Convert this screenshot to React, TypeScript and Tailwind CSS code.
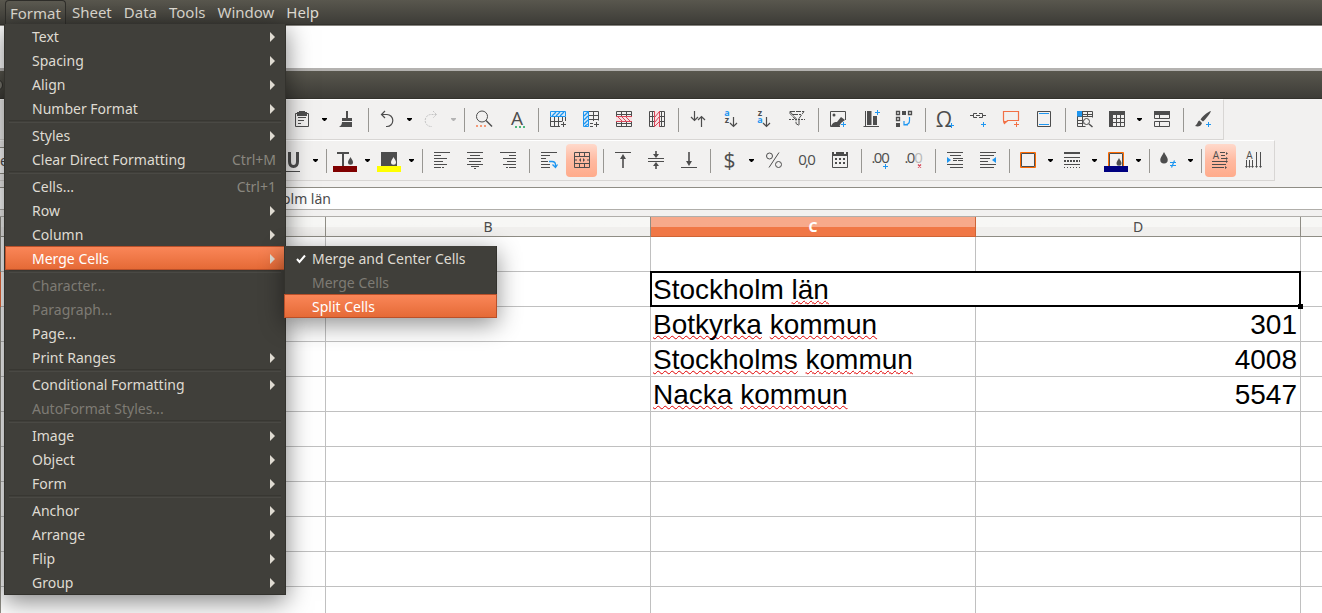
import React from "react";

const INK = "#4d4d4d";
const BLUE = "#1e96f0";
const RED = "#d8485a";

type Tool =
  | { kind: "button"; label: string; art: React.ReactNode; active?: boolean; muted?: boolean }
  | { kind: "caret"; label: string; muted?: boolean }
  | { kind: "sep" };

const sep: Tool = { kind: "sep" };
const caret = (label: string, muted = false): Tool => ({ kind: "caret", label: label + " options", muted });
const tool = (label: string, art: React.ReactNode, active = false): Tool => ({ kind: "button", label, art, active });

const Plus = ({ x, y, c = BLUE }: { x: number; y: number; c?: string }) => (
  <path d={`M${x - 2.5} ${y}h5M${x} ${y - 2.5}v5`} stroke={c} />
);
const Drop = ({ x, y, s = 1, c = INK }: { x: number; y: number; s?: number; c?: string }) => (
  <path
    d={`M${x} ${y}c${s} ${2.4 * s} ${2.5 * s} ${3.4 * s} ${2.5 * s} ${5.2 * s}a${2.5 * s} ${2.5 * s} 0 0 1 ${-5 * s} 0c0 ${-1.8 * s} ${1.5 * s} ${-2.8 * s} ${2.5 * s} ${-5.2 * s}z`}
    fill={c}
    stroke="none"
  />
);
const Label = ({ x, y, size, c = INK, bold, children }: { x: number; y: number; size: number; c?: string; bold?: boolean; children: string }) => (
  <text x={x} y={y} fontSize={size} fill={c} stroke="none" textAnchor="middle" fontWeight={bold ? 700 : 400} fontFamily="Open Sans, sans-serif">
    {children}
  </text>
);

const standardTools: Tool[] = [
  tool("Paste", <><path d="M5.5 6.5h13v13h-13zM8 10.5h8M8 13.5h6M8 16.5h3" /><path d="M7 5h2V4h6v1h2v4H7z" fill={INK} stroke="none" /></>),
  caret("Paste"),
  tool("Clone formatting", <path d="M12 4h2v7h4v3H8v-3h4zM8 15h10v5H5c2-1 3-3 3-5z" fill={INK} stroke="none" />),
  sep,
  tool("Undo", <path d="M10 4 6.5 7.5 10 11M6.5 7.5H12a5.8 6 0 0 1 0 12h-1" strokeWidth="1.2" />),
  caret("Undo"),
  tool("Redo", <path d="M14 4l3.500 3.500L14 11M17.500 7.500H12a5.800 6 0 0 0 0 12h1" strokeDasharray="2 1" stroke="#c4c4c4" />),
  caret("Redo", true),
  sep,
  tool("Find and replace", <><circle cx="11" cy="9.500" r="5.500" /><path d="M15 13.500l6 6" strokeWidth="1.400" /><path d="M5 19h2M9 19h2M13 19h2" stroke="#f59a78" strokeWidth="2" /></>),
  tool("Spelling", <><Label x={13} y={18} size={19}>A</Label><path d="M11 20h2M15 20h2M19 20h2" stroke="#4cb87c" strokeWidth="2" /></>),
  sep,
  tool("Insert row", <><path d="M5.500 10v9.500H15M9.500 10v9M13.500 10v9M17.500 10v4M5.500 14.500h12M20.500 10v4" /><path d="M5.500 4.500h15v5h-15z" stroke={BLUE} fill="#dcecf8" /><path d="M7 9l4-4M11 9l4-4M15 9l4-4" stroke={BLUE} strokeWidth="1.300" /><Plus x={18.5} y={17.5} c={INK} /></>),
  tool("Insert column", <><path d="M10 4.500h10.500v9M10 8.500h10.500M10 12.500h10.500M15.500 4v10M12 16.500h3M12 19.500h3" /><path d="M5.500 4.500h5v15h-5z" stroke={BLUE} fill="#dcecf8" /><path d="M6 9l4-4M6 13l4-4M6 17l4-4M7 19l3-2" stroke={BLUE} strokeWidth="1.300" /><Plus x={18.5} y={17.5} c={INK} /></>),
  tool("Delete rows", <><path d="M5.500 4.500h15v15h-15zM10.500 4v16M15.500 4v16M5 7.500h16M5 16.500h16" /><path d="M5 9h16v6H5z" fill="#f7e1e3" stroke="none" /><path d="M5 9.500h16M5 14.500h16M7 10l4 4M11 10l4 4M15 10l4 4" stroke={RED} /></>),
  tool("Delete columns", <><path d="M5.500 4.500h15v15h-15zM8.500 4v16M17.500 4v16M5 9.500h16M5 14.500h16" /><path d="M10 4h6v16h-6z" fill="#f7e1e3" stroke="none" /><path d="M10.500 4v16M15.500 4v16M11 10l4-5M11 15l4-5M11 19l4-4" stroke={RED} /></>),
  sep,
  tool("Sort", <path d="M9.500 4v9M6 10l3.500 3.500L13 10M16.500 20V9.500M13 13l3.500-3.500L20 13" strokeWidth="1.200" />),
  tool("Sort ascending", <><Label x={9} y={9} size={9} c={BLUE} bold>a</Label><Label x={9} y={16} size={9} bold>z</Label><path d="M15.500 10v9M12 16l3.500 3.500L19 16" strokeWidth="1.200" /></>),
  tool("Sort descending", <><Label x={9} y={9} size={9} bold>z</Label><Label x={9} y={16} size={9} c={BLUE} bold>a</Label><path d="M15.500 10v9M12 16l3.500 3.500L19 16" strokeWidth="1.200" /></>),
  tool("AutoFilter", <><path d="M6 4.500h14l-5 7v7l-3-2v-5zM9 7.500h8M6 4.500v2l5 5.500" strokeDasharray="5 1" /><path d="M5 12.500h16" strokeDasharray="2 1" /></>),
  sep,
  tool("Insert image", <><path d="M20.500 13V4.500h-15v15H15" /><circle cx="9" cy="8" r="1.500" fill={INK} stroke="none" /><path d="M6 19c2-4 4-4 6-4l4-5 4 3-4 3-2 4z" fill={INK} stroke="none" /><Plus x={18.5} y={17.5} /></>),
  tool("Insert chart", <><path d="M7.500 4v15.500M5.500 19.500H21" /><path d="M9 4h4.500v14H9zM15 9h4v9h-4z" fill={INK} stroke="none" /><Plus x={19.5} y={5.500} /></>),
  tool("Insert pivot table", <><path d="M5.500 4.500h3v3h-3zM17.500 4.500h3v3h-3zM5.500 10.500h3v3h-3z" strokeWidth="1.300" /><path d="M11 4h4v4h-4zM5 16h4v4H5z" fill={INK} stroke="none" /><path d="M18.500 10v3.500q0 4-4 4h-2M13 14v4h4" stroke={BLUE} strokeWidth="1.200" /></>),
  sep,
  tool("Insert special character", <><Label x={12} y={20} size={21}>Ω</Label><Plus x={19.5} y={18.5} /></>),
  tool("Insert hyperlink", <><path d="M5 8.500h3M18 8.500h3M12 6.500H8.500v4H12M14 6.500h3.500v4H14M11 8.500h4" /><Plus x={18.5} y={17.5} /></>),
  tool("Insert comment", <><path d="M5.500 4.500h15v9h-11l-3 3-1-3z" stroke="#f27146" strokeWidth="1.200" /><path d="M5 14h5l-4 3z" fill="#f27146" stroke="none" /><Plus x={18.5} y={17.5} c="#f27146" /></>),
  tool("Headers and footers", <><path d="M6.500 4.500h13v15h-13z" /><path d="M8 6.500h10M8 17.500h10" stroke={BLUE} /></>),
  sep,
  tool("Define print area", <><path d="M5.500 4.500h15v6M5.500 9.500h15M5.500 13.500h6M5.500 16.500h6M5.500 4.500v15h8M10.500 4v15M15.500 4v6M10 7.500h10" /><path d="M5 4h5v5.500H5z" fill={BLUE} stroke="none" /><circle cx="14.500" cy="14.500" r="3" fill="#f2f1f0" /><path d="M17 17l3.500 3" strokeWidth="1.500" /></>),
  tool("Freeze rows and columns", <><path d="M4 4h16v4H4zM4 4h4v16H4z" fill={INK} stroke="none" /><path d="M5 19.500h14.500V7M11.500 8v12M15.500 8v12M8 11.500h12M8 15.500h12" /></>),
  caret("Freeze"),
  tool("Split window", <><path d="M5 4h16v4H5z" fill={INK} stroke="none" /><path d="M5.500 8v3.500h15V8M10.500 8v4M5.500 14.500h15v5h-15zM10.500 14v6" /></>),
  sep,
  tool("Show draw functions", <><path d="M21 4c-4 1-9 6-10.500 8.500l2.500 2C15 13 20 7 21 4zM9.500 13.500c-2 .5-2 4-4.500 5.500 3 1 6 .5 7-3z" fill={INK} stroke="none" /><Plus x={18.5} y={17.5} /></>),
];

const formattingTools: Tool[] = [
  tool("Underline", <><path d="M8.500 4v9.500q0 5 4 5t4-5V4" strokeWidth="3" /><path d="M2 23.500h17" /></>),
  caret("Underline"),
  sep,
  tool("Font color", <><path d="M4 5h12M10 5v13" strokeWidth="2" /><Drop x={17.5} y={9} /><path d="M0 18h24v6H0z" fill="#800000" stroke="none" /></>),
  caret("Font color"),
  tool("Highlighting color", <><path d="M4 4h16v14H4z" fill={INK} stroke="none" /><Drop x={16.5} y={9} c="#f2f1f0" /><path d="M0 18h24v6H0z" fill="#ffff00" stroke="none" /></>),
  caret("Highlighting color"),
  sep,
  tool("Align left", <path d="M5 4.500h16M5 7.500h7M5 10.500h13M5 13.500h9M5 16.500h13M5 19.500h7M13 19.500h2" />),
  tool("Center horizontally", <path d="M5 4.500h16M8 7.500h10M5 10.500h16M7 13.500h12M5 16.500h16M9 18.500h8M12 20.500h2" />),
  tool("Align right", <path d="M5 4.500h16M14 7.500h7M8 10.500h13M12 13.500h9M8 16.500h13M14 19.500h7M11 19.500h2" />),
  sep,
  tool("Wrap text", <><path d="M5 4.500h16M5 7.500h9M5 10.500h5M5 13.500h7M5 16.500h9M5 19.500h9" /><path d="M13 13.500h3q3.500 0 3.500 3.500v2M16.500 16.500l3 3 2-3" stroke={BLUE} strokeWidth="1.300" /></>),
  tool("Merge and center cells", <><path d="M5.500 4.500h15v15h-15zM5.500 8.500h15M5.500 15.500h15M10.500 4v4M15.500 4v4M10.500 16v4M15.500 16v4M5 12h3M18 12h3" /><path d="M12 10v4l-2-2zM14 10v4l2-2z" fill={INK} stroke="none" /></>, true),
  sep,
  tool("Align top", <><path d="M5 4.500h16" /><path d="M13 9v11" strokeWidth="1.600" /><path d="M13 6l3 5h-6z" fill={INK} stroke="none" /></>),
  tool("Center vertically", <><path d="M5 10.500h16M5 13.500h16" /><path d="M13 3v5M13 16v5" strokeWidth="1.600" /><path d="M10 6h6l-3 4zM10 18h6l-3-4z" fill={INK} stroke="none" /></>),
  tool("Align bottom", <><path d="M5 19.500h16" /><path d="M13 4v10" strokeWidth="1.600" /><path d="M13 18l3-5h-6z" fill={INK} stroke="none" /></>),
  sep,
  tool("Format as currency", <Label x={12.500} y={19.500} size={21}>$</Label>),
  caret("Currency"),
  tool("Format as percent", <><circle cx="8.500" cy="8" r="3" /><circle cx="17.500" cy="16.500" r="3" /><path d="M18 4.500l-10 15" /></>),
  tool("Format as number", <><Label x={8.500} y={17} size={15}>0</Label><Label x={13} y={18} size={15}>,</Label><Label x={17.500} y={17} size={15}>0</Label></>),
  tool("Format as date", <><path d="M5.500 7v12.500h15V7" /><path d="M5 4h2v2h2V4h8v2h2V4h2v4H5zM8 10h2v2H8zM12 10h2v2h-2zM16 10h2v2h-2zM8 14h2v2H8zM12 14h2v2h-2zM16 14h2v2h-2z" fill={INK} stroke="none" /></>),
  sep,
  tool("Add decimal place", <><Label x={5.500} y={15} size={15}>.</Label><Label x={10} y={15} size={15}>0</Label><Label x={17.500} y={15} size={15}>0</Label><Plus x={17.500} y={18.500} /></>),
  tool("Delete decimal place", <><Label x={5.500} y={15} size={15}>.</Label><Label x={10} y={15} size={15}>0</Label><Label x={17.500} y={15} size={15} c="#b9b9b9">0</Label><path d="M17 16.500l3 3M20 16.500l-3 3" stroke={RED} strokeWidth="1.300" /></>),
  sep,
  tool("Increase indent", <><path d="M5 4.500h16M8 7.500h11M11 10.500h10M11 12.500h4M16 12.500h5M5 16.500h16M8 19.500h13" /><path d="M5 9v6l4-3z" fill={BLUE} stroke="none" /></>),
  tool("Decrease indent", <><path d="M5 4.500h16M5 7.500h14M5 10.500h10M5 13.500h8M5 16.500h16M5 19.500h14" /><path d="M21 9v6l-4-3z" fill={BLUE} stroke="none" /></>),
  sep,
  tool("Borders", <><path d="M4.500 4.500h15v15h-15z" stroke="#ff6a00" /><path d="M5.500 5.500h13v13h-13z" /></>),
  caret("Borders"),
  tool("Border style", <><path d="M4 5h16" strokeWidth="2" /><path d="M4 9.500h16M4 16.500h16" /><path d="M4 13h16" strokeWidth="2" strokeDasharray="2 1" /><path d="M4 19.500h16" strokeDasharray="1 2" /></>),
  caret("Border style"),
  tool("Border color", <><path d="M4.500 18V4.500h15V18" stroke="#ff6a00" /><path d="M5.500 18V5.500h13V18" /><Drop x={15} y={10} /><path d="M0 18h24v6H0z" fill="#000080" stroke="none" /></>),
  caret("Border color"),
  sep,
  tool("Conditional formatting", <><Drop x={8} y={4} s={1.5} /><path d="M14 14.500h6M14 17.500h6M18.500 12.500l-3 7" stroke={BLUE} strokeWidth="1.200" /></>),
  caret("Conditional formatting"),
  sep,
  tool("Text direction from left to right", <><Label x={8} y={11} size={10}>A</Label><path d="M12 4.500h5M13 7.500h4M13 10.500h5M4 13.500h14M4 16.500h14M4 19.500h12" /><path d="M18 4l2 1.500-2 1.500zM18 9l2 1.500-2 1.500zM18 12l2 1.500-2 1.500zM17 18l2 1.500-2 1.500z" fill={INK} stroke="none" /></>, true),
  tool("Text direction from top to bottom", <><Label x={8.500} y={11} size={10}>A</Label><path d="M5.500 12v6M8.500 12v6M11.500 12v6M15.500 4v14M19.500 4v14" /><path d="M4 18h3l-1.500 2zM7 18h3l-1.500 2zM10 18h3l-1.500 2zM14 18h3l-1.500 2zM18 18h3l-1.500 2z" fill={INK} stroke="none" /></>),
];

function ToolItems({ items }: { items: Tool[] }) {
  return (
    <>
      {items.map((t, i) => {
        if (t.kind === "sep")
          return (
            <span key={i} className="flex w-2 shrink-0 pl-[5px]">
              <span className="h-6 w-px bg-[#989692]" />
            </span>
          );
        if (t.kind === "caret")
          return (
            <button key={i} aria-label={t.label} className="flex h-8 w-[11px] shrink-0 items-center justify-center">
              <svg width="5" height="3" viewBox="0 0 5 3"><path d="M0 0h5v1L3 3H2L0 1z" fill={t.muted ? "#b4b4b4" : "#000"} /></svg>
            </button>
          );
        return (
          <button
            key={i}
            aria-label={t.label}
            className={
              "mx-px flex h-[33px] w-[31px] shrink-0 items-center justify-center rounded" +
              (t.active ? " bg-linear-to-b from-[#ffd9cb] via-[#ffb9a0] to-[#ffab8b]" : "")
            }
          >
            <svg width="25" height="25" viewBox="0 0 25 25" fill="none" stroke={INK} strokeWidth="1" className="shrink-0 overflow-visible">
              {t.art}
            </svg>
          </button>
        );
      })}
    </>
  );
}

type Entry = { label: string; sub?: boolean; keys?: string; off?: boolean; open?: boolean };
const formatMenu: Entry[][] = [
  [{ label: "Text", sub: true }, { label: "Spacing", sub: true }, { label: "Align", sub: true }, { label: "Number Format", sub: true }],
  [{ label: "Styles", sub: true }, { label: "Clear Direct Formatting", keys: "Ctrl+M" }],
  [{ label: "Cells...", keys: "Ctrl+1" }, { label: "Row", sub: true }, { label: "Column", sub: true }, { label: "Merge Cells", sub: true, open: true }],
  [{ label: "Character...", off: true }, { label: "Paragraph...", off: true }, { label: "Page..." }, { label: "Print Ranges", sub: true }],
  [{ label: "Conditional Formatting", sub: true }, { label: "AutoFormat Styles...", off: true }],
  [{ label: "Image", sub: true }, { label: "Object", sub: true }, { label: "Form", sub: true }],
  [{ label: "Anchor", sub: true }, { label: "Arrange", sub: true }, { label: "Flip", sub: true }, { label: "Group", sub: true }],
];

const HOT = "border-[#b9502a] bg-linear-to-b from-[#fa8658] to-[#e56a36] text-white";

function SubMenu() {
  return (
    <div role="menu" className="absolute top-0 left-[279px] z-20 w-[213px] border border-t-0 border-[#33322d] bg-[#403f3a] text-[#dfdbd2] shadow-[0_6px_24px_rgba(0,0,0,0.45)]">
      <button className="flex h-6 w-full items-center pt-0.5 pl-[11px] whitespace-nowrap">
        <svg width="10" height="10" viewBox="0 0 10 10" className="mr-1.5"><path d="M1 5l2.500 3L9 1.500" fill="none" stroke="#fff" strokeWidth="2" /></svg>
        Merge and Center Cells
      </button>
      <button disabled className="flex h-6 w-full items-center pt-0.5 pl-[27px] text-[#7e7b74]">Merge Cells</button>
      <button className={"-mx-px -mb-px flex h-6 w-[213px] items-center border pt-0.5 pl-[27px] " + HOT}>Split Cells</button>
    </div>
  );
}

function FormatMenu() {
  return (
    <div role="menu" className="absolute top-full left-[-1px] z-10 w-[282px] border border-t-0 border-[#33322d] bg-[#403f3a] text-[#dfdbd2] shadow-[0_6px_24px_rgba(0,0,0,0.5)]">
      {formatMenu.map((group, g) => (
        <div key={g}>
          {g > 0 && <div className="mx-1 h-[3px] border-y border-t-[#383732] border-b-[#4a4944]" />}
          {group.map((e) => (
            <div key={e.label} className="relative">
              <button
                disabled={e.off}
                className={
                  "flex h-6 items-center justify-between border pt-0.5 pr-2 pl-[26px] whitespace-nowrap " +
                  (e.open ? "w-[280px] " + HOT : e.off ? "w-full border-transparent text-[#7e7b74]" : "w-full border-transparent")
                }
              >
                <span>{e.label}</span>
                {e.keys && <span className="text-[#8a877f]">{e.keys}</span>}
                {e.sub && <svg width="6" height="10" viewBox="0 0 6 10"><path d="M0 0v10l5-5z" fill="#dfdbd2" /></svg>}
              </button>
              {e.open && <SubMenu />}
            </div>
          ))}
        </div>
      ))}
    </div>
  );
}

const Typo = ({ children }: { children: string }) => (
  <span className="underline decoration-[#e00000] decoration-wavy decoration-1 underline-offset-1 [text-decoration-skip-ink:none]">{children}</span>
);

const CELL = "h-[35px] border-r border-b border-[#c0c0c0] pt-0.5 pb-0 pl-0.5 pr-[3px] text-[28px] leading-[32px] last:border-r-0";
const HEAD = "h-5 border-r border-b border-[#8f8d85] bg-linear-to-b from-[#f7f7f5] from-50% to-[#f0efed] to-50% p-0 font-normal leading-[19px] last:border-r-0";

const data: { name: string; value: string }[] = [
  { name: "Botkyrka", value: "301" },
  { name: "Stockholms", value: "4008" },
  { name: "Nacka", value: "5547" },
];

export default function App() {
  return (
    <div className="flex h-screen flex-col overflow-hidden bg-[#f2f1f0] font-['Noto_Sans','Open_Sans',sans-serif] text-[14px] leading-5 text-[#4c4c4c]">
      <nav className="relative z-10 flex h-[25px] shrink-0 border-b border-[#33322d] bg-linear-to-b from-[#59574e] to-[#3d3c37] pl-[5px] text-[#dfdbd2]">
        <div className="relative">
          <button className="h-6 rounded-t border border-b-0 border-[#2f2e2a] bg-linear-to-b from-[#5c5a51] to-[#403f3a] px-1 text-[15px]">Format</button>
          <FormatMenu />
        </div>
        {["Sheet", "Data", "Tools", "Window", "Help"].map((m) => (
          <button key={m} className="px-1.5 text-[15px]">{m}</button>
        ))}
      </nav>
      <div className="h-[46px] shrink-0 border-t border-b-[3px] border-t-[#85837e] border-b-[#b4b2b0] bg-white" />
      <div className="flex h-7 shrink-0 items-center border-b border-[#33322d] bg-linear-to-b from-[#59574e] to-[#3d3c37]">
        <button aria-label="Close" className="-ml-[9px] size-3 rounded-full border border-[#2f2e2a] bg-[#77756d]" />
      </div>

      <div className="flex shrink-0 flex-col border-b border-[#8f8d85] pb-[6px]">
        <div className="flex">
          <div role="toolbar" aria-label="Standard" className="flex h-[41px] items-center border-t border-r border-b border-t-white border-r-[#d8d6d4] border-b-[#d8d6d4] pr-1 pl-[286px]">
            <ToolItems items={standardTools} />
          </div>
        </div>
        <div className="flex">
          <div role="toolbar" aria-label="Formatting" className="flex h-[41px] items-center border-t border-r border-b border-t-white border-r-[#d8d6d4] border-b-[#d8d6d4] pr-1">
            <div className="mr-2 flex h-[27px] w-[269px] shrink-0 items-center border-y border-[#8f8d85] bg-white">e</div>
            <ToolItems items={formattingTools} />
          </div>
        </div>
      </div>

      <div className="flex h-[22px] shrink-0 border-b border-[#b0aeaa]">
        <input aria-label="Name box" className="w-[150px] bg-white" />
        <input aria-label="Formula" defaultValue="Stockholm län" className="ml-20 min-w-0 flex-1 bg-white pl-2 outline-none" />
      </div>

      <main className="mt-[6px] min-h-0 flex-1 overflow-hidden border-t border-[#b0aeaa] bg-white">
        <table className="w-full table-fixed border-separate border-spacing-0">
          <colgroup>
            <col className="w-px" />
            <col className="w-[325px]" />
            <col className="w-[325px]" />
            <col className="w-[325px]" />
            <col className="w-[325px]" />
            <col />
          </colgroup>
          <thead>
            <tr>
              <th className={HEAD} />
              <th className={HEAD}>A</th>
              <th className={HEAD}>B</th>
              <th className="h-5 border-r border-b border-[#cf6436] bg-linear-to-b from-[#f7a98b] from-50% to-[#f07746] to-50% p-0 leading-[19px] font-bold text-white">C</th>
              <th className={HEAD}>D</th>
              <th className={HEAD} />
            </tr>
          </thead>
          <tbody>
            <tr>
              <th className="border-r border-[#8f8d85] p-0" />
              <td className={CELL} /><td className={CELL} /><td className={CELL} /><td className={CELL} /><td className={CELL} />
            </tr>
            <tr>
              <th className="border-r border-[#e9693a] p-0" />
              <td className={CELL} /><td className={CELL} />
              <td colSpan={2} className={CELL + " relative text-black font-['Liberation_Sans',Arial,sans-serif]"}>
                Stockholm <Typo>län</Typo>
                <span className="pointer-events-none absolute -inset-px border-2 border-black" />
                <span className="absolute -right-[3px] -bottom-[3px] size-[5px] bg-black" />
              </td>
              <td className={CELL} />
            </tr>
            {data.map((d) => (
              <tr key={d.name}>
                <th className="border-r border-[#8f8d85] p-0" />
                <td className={CELL} /><td className={CELL} />
                <td className={CELL + " text-black font-['Liberation_Sans',Arial,sans-serif]"}>
                  <Typo>{d.name}</Typo> <Typo>kommun</Typo>
                </td>
                <td className={CELL + " text-right text-black font-['Liberation_Sans',Arial,sans-serif]"}>{d.value}</td>
                <td className={CELL} />
              </tr>
            ))}
            {[6, 7, 8, 9, 10, 11, 12].map((n) => (
              <tr key={n}>
                <th className="border-r border-[#8f8d85] p-0" />
                <td className={CELL} /><td className={CELL} /><td className={CELL} /><td className={CELL} /><td className={CELL} />
              </tr>
            ))}
          </tbody>
        </table>
      </main>
    </div>
  );
}
